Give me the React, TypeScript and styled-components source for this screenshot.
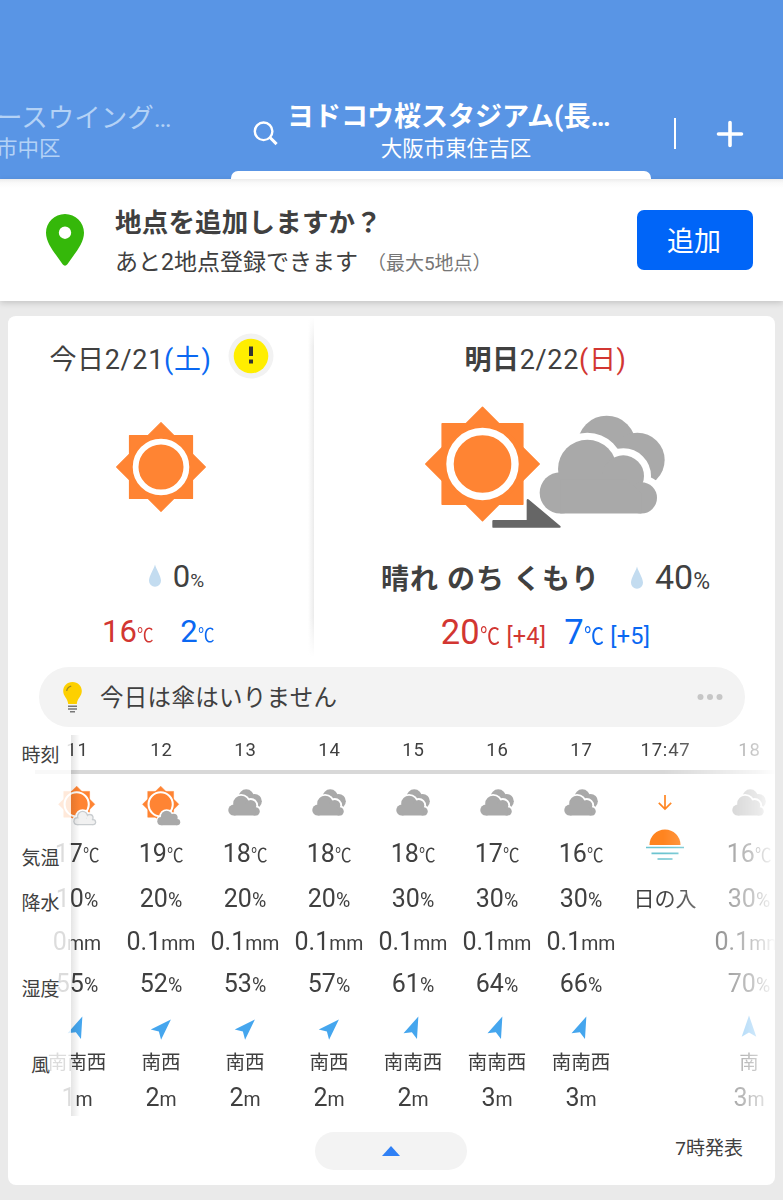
import React from "react";
import styled, { createGlobalStyle, css } from "styled-components";

const INK = "#404040";
const RED = "#d23632";
const BLUE = "#0a68f2";

const GlobalStyle = createGlobalStyle`
  *, *::before, *::after { box-sizing: border-box; }
  body {
    margin: 0;
    background: #eaeaea;
    color: ${INK};
    font-family: Roboto, "Noto Sans CJK JP", sans-serif;
  }
`;

const Screen = styled.div`
  width: 783px;
  height: 1200px;
  overflow: hidden;
  background: #eaeaea;
`;

/* ---------- header ---------- */

const Header = styled.header`
  display: flex;
  height: 179px;
  padding-top: 98px;
  background: #5995e5;
  color: #fff;
  white-space: nowrap;
`;

const Tab = styled.div<{ $active?: boolean }>`
  display: flex;
  flex: none;
  width: ${(p) => (p.$active ? 420 : 231)}px;
  height: 81px;
  padding-left: ${(p) => (p.$active ? 22 : 0)}px;
  color: ${(p) => (p.$active ? "#fff" : "#b4d2f6")};
  ${(p) =>
    p.$active &&
    css`
      position: relative;
      &::after {
        content: "";
        position: absolute;
        left: 0;
        right: 0;
        bottom: 0;
        height: 8px;
        background: #fff;
        border-radius: 7px 7px 0 0;
      }
    `}
`;

const SearchSlot = styled.div`
  width: 34px;
  padding-top: 22px;
`;

const TabText = styled.div<{ $active?: boolean }>`
  padding-top: 1px;
  text-align: ${(p) => (p.$active ? "center" : "left")};
  width: ${(p) => (p.$active ? "338px" : "auto")};
  margin-left: ${(p) => (p.$active ? 0 : -4)}px;
`;

const TabTitle = styled.div<{ $active?: boolean }>`
  padding-right: ${(p) => (p.$active ? 20 : 0)}px;
  font-size: ${(p) => (p.$active ? 27 : 26.5)}px;
  line-height: 37px;
  font-weight: ${(p) => (p.$active ? 700 : 400)};
`;

const TabSub = styled.div`
  font-size: 21.5px;
  line-height: 26px;
`;

const HeaderTools = styled.div`
  display: flex;
  align-items: center;
  height: 72px;
  margin-left: 7px;
`;

const ToolDivider = styled.span`
  width: 2px;
  height: 31px;
  margin: 0 40px 2px 16px;
  background: #fff;
`;

/* ---------- add-location banner ---------- */

const Banner = styled.section`
  display: flex;
  align-items: center;
  height: 122px;
  padding: 0 30px 0 46px;
  background: linear-gradient(#ececec 0, #fafafa 4px, #fff 9px);
  box-shadow: 0 2px 6px rgba(0, 0, 0, 0.16);
`;

const BannerText = styled.div`
  flex: 1;
  padding: 6px 0 0 31px;
  white-space: nowrap;
`;

const BannerTitle = styled.div`
  font-size: 26.5px;
  line-height: 40px;
  letter-spacing: 0.2px;
  font-weight: 700;
`;

const BannerSub = styled.div`
  font-size: 23px;
  line-height: 40px;
`;

const BannerNote = styled.span`
  margin-left: 9px;
  font-size: 19px;
  color: #767676;
`;

const AddButton = styled.button`
  width: 116px;
  height: 60px;
  border: 0;
  border-radius: 7px;
  background: #0065f8;
  color: #fff;
  font: 400 27px/60px Roboto, "Noto Sans CJK JP", sans-serif;
  padding: 2px 2px 0 0;
`;

/* ---------- forecast card ---------- */

const Card = styled.main`
  width: 767px;
  height: 869px;
  margin: 15px 8px 0;
  padding-top: 1px;
  border-radius: 8px;
  background: #fff;
  overflow: hidden;
`;

const Days = styled.div`
  display: flex;
  height: 350px;
`;

const Day = styled.section<{ $wide?: boolean }>`
  display: flex;
  flex-direction: column;
  align-items: center;
  width: ${(p) => (p.$wide ? 461 : 306)}px;
  height: 340px;
  padding-left: ${(p) => (p.$wide ? 2 : 0)}px;
  ${(p) =>
    !p.$wide &&
    css`
      background:
        linear-gradient(#fff, rgba(255, 255, 255, 0) 30px, rgba(255, 255, 255, 0) 300px, #fff),
        linear-gradient(to right, #fff, #ebebeb) right / 6px 100% no-repeat;
    `}
`;

const DayDate = styled.div`
  display: flex;
  align-items: center;
  height: 82px;
  font-size: 27px;
  letter-spacing: 0.65px;
  white-space: nowrap;
`;

const Weekday = styled.span<{ $color: string }>`
  color: ${(p) => p.$color};
`;

const Alert = styled.span`
  display: flex;
  margin: -4px -1px 0 16px;
`;

const Picture = styled.div<{ $wide?: boolean }>`
  display: flex;
  align-items: center;
  justify-content: center;
  height: 140px;
  padding: ${(p) => (p.$wide ? "5px 2px 0 0" : "0 0 2px")};
`;

const Rain = styled.div<{ $wide?: boolean }>`
  display: flex;
  align-items: baseline;
  height: 50px;
  margin: ${(p) => (p.$wide ? 18 : 14)}px 0 0 ${(p) => (p.$wide ? 0 : 31)}px;
  line-height: 50px;
  font-size: ${(p) => (p.$wide ? 34 : 31)}px;
  white-space: nowrap;
`;

const RainUnit = styled.span<{ $wide?: boolean }>`
  font-size: ${(p) => (p.$wide ? 23 : 19)}px;
`;

const Condition = styled.strong`
  font-size: 28px;
  font-weight: 700;
  letter-spacing: 1px;
  margin-right: 31px;
`;

const Temps = styled.div<{ $wide?: boolean }>`
  display: flex;
  align-items: baseline;
  gap: ${(p) => (p.$wide ? 18 : 27)}px;
  height: 50px;
  line-height: 50px;
  margin-top: 5px;
  margin-right: ${(p) => (p.$wide ? 0 : 6)}px;
  font-size: ${(p) => (p.$wide ? 34.5 : 31)}px;
  white-space: nowrap;
`;

const Temp = styled.span<{ $color: string }>`
  color: ${(p) => p.$color};
`;

const Celsius = styled.small<{ $size: number }>`
  display: inline-block;
  margin-right: ${(p) => -0.14 * p.$size}px;
  font-size: ${(p) => p.$size}px;
  transform: scaleX(0.87);
  transform-origin: left;
`;

const Diff = styled.small`
  margin-left: 7px;
  font-size: 23.5px;
  letter-spacing: 0.2px;
`;

const Tip = styled.div`
  display: flex;
  align-items: center;
  width: 706px;
  height: 60px;
  margin: 0 31px;
  padding: 0 22px 0 22px;
  border-radius: 30px;
  background: #f3f3f3;
  font-size: 23.5px;
  letter-spacing: 0.3px;
`;

const TipText = styled.span`
  flex: 1;
  padding: 0 0 3px 15px;
`;

/* ---------- hourly table ---------- */

const Hourly = styled.div`
  position: relative;
  height: 392px;
  margin-top: 4px;
  overflow: hidden;
`;

const Columns = styled.div`
  display: flex;
  width: 767px;
  height: 390px;
  padding-left: 27px;
  overflow: hidden;
  mask-image: linear-gradient(to right, #000 655px, rgba(0, 0, 0, 0.25) 750px, rgba(0, 0, 0, 0.02));
`;

const Column = styled.div`
  flex: none;
  width: 84px;
  text-align: center;
  white-space: nowrap;
`;

const Time = styled.div`
  height: 43px;
  border-bottom: 4px solid #d8d8d8;
  font-size: 18.5px;
  line-height: 39px;
  letter-spacing: 0.8px;
  padding-left: 1px;
`;

const IconCell = styled.div<{ $dy: number }>`
  display: flex;
  align-items: center;
  justify-content: center;
  height: 60px;
  padding-top: ${(p) => Math.max(p.$dy, 0)}px;
  padding-bottom: ${(p) => Math.max(-p.$dy, 0)}px;
`;

const Value = styled.div<{ $h: number }>`
  height: ${(p) => p.$h}px;
  line-height: ${(p) => p.$h}px;
  font-size: 25px;
`;

const Unit = styled.small`
  font-size: 19.5px;
`;

const WindIcon = styled.div`
  display: flex;
  align-items: center;
  justify-content: center;
  height: 41px;
`;

const Direction = styled.div`
  height: 29px;
  font-size: 19.5px;
  line-height: 27px;
`;

const SunsetIcon = styled.div`
  display: flex;
  justify-content: center;
  height: 100px;
  padding-top: 20px;
`;

const SunsetText = styled.div`
  height: 50px;
  font-size: 21px;
  line-height: 51px;
`;

const Labels = styled.div`
  position: absolute;
  left: 0;
  top: 4px;
  width: 63px;
  height: 381px;
  padding-left: 2px;
  background: rgba(255, 255, 255, 0.82);
  font-size: 19px;
  text-align: center;
`;

const LabelShade = styled.div`
  position: absolute;
  left: 63px;
  top: 4px;
  width: 9px;
  height: 381px;
  background: linear-gradient(to right, rgba(0, 0, 0, 0.1), transparent);
`;

const Label = styled.div<{ $gap?: number }>`
  height: 40px;
  margin-top: ${(p) => p.$gap ?? 0}px;
  line-height: 41px;
`;

const CardFoot = styled.div`
  display: grid;
  grid-template-columns: 1fr 152px 1fr;
  align-items: center;
  height: 50px;
  margin-top: 3px;
  padding: 0 32px 0 31px;
`;

const Collapse = styled.button`
  grid-column: 2;
  display: flex;
  align-items: center;
  justify-content: center;
  height: 38px;
  padding: 0;
  border: 0;
  border-radius: 19px;
  background: #f3f3f3;
`;

const Issued = styled.span`
  justify-self: end;
  margin-bottom: 9px;
  font-size: 19px;
`;

/* ---------- drawings ---------- */

const SunShape = ({ r = 25.4, w = 5.8 }: { r?: number; w?: number }) => (
  <g>
    <g fill="#ff8433" stroke="#ff8433" strokeWidth="1.2" strokeLinejoin="round">
      <rect x="-31.5" y="-31.5" width="63" height="63" />
      <path d="M0-44.3 44.3 0 0 44.3-44.3 0Z" />
    </g>
    <circle r={r} fill="none" stroke="#fff" strokeWidth={w} />
  </g>
);

const CloudFront = ({ inset = 0 }: { inset?: number }) => (
  <>
    <circle cx="631" cy="489.500" r={62 - inset} />
    <circle cx="712" cy="418" r={88 - inset} />
    <circle cx="820" cy="439" r={62 - inset} />
    <circle cx="874" cy="504.500" r={47 - inset} />
    <path d={`M631 450H830L874 490V${551.5 - inset}H631Z`} />
  </>
);

const CloudPair = () => (
  <g>
    <g fill="#a9a9a9">
      <circle cx="770" cy="345" r="87" />
      <circle cx="862" cy="391" r="82" />
    </g>
    <g fill="#fff" stroke="#fff" strokeWidth="42">
      <CloudFront />
    </g>
    <g fill="#a9a9a9">
      <CloudFront />
    </g>
  </g>
);

const Search = () => (
  <svg width="26" height="26" viewBox="0 0 26 26" fill="none" stroke="#fff" strokeWidth="2.4">
    <circle cx="10.600" cy="11.300" r="8.800" />
    <path d="m17 17.500 6.600 6.600" strokeWidth="3" />
  </svg>
);

const Plus = () => (
  <svg width="28" height="28" viewBox="0 0 28 28" stroke="#fff" strokeWidth="3.600" strokeLinecap="round">
    <path d="M14 2.500v23M2.500 14h23" />
  </svg>
);

const Pin = () => (
  <svg width="38" height="52" viewBox="0 0 38 52">
    <path
      fill="#35b80a"
      fillRule="evenodd"
      d="M19 0C8.500 0 0 8.400 0 18.700 0 30 10 40 16.600 50.300Q19 53 21.400 50.300C28 40 38 30 38 18.700 38 8.400 29.500 0 19 0Zm0 12.500a6.200 6.200 0 1 1 0 12.400 6.200 6.200 0 0 1 0-12.400Z"
    />
  </svg>
);

const AlertIcon = () => (
  <svg width="46" height="46" viewBox="0 0 46 46">
    <circle cx="23" cy="23" r="22.500" fill="#f2f2f2" />
    <circle cx="23" cy="23" r="17.300" fill="#ffee00" />
    <path d="M21 13.500h4v9.500h-4zM21 26.500h4v4h-4z" fill="#333" />
  </svg>
);

const Drop = () => (
  <svg width="24" height="23" viewBox="0 0 24 23">
    <path d="M6 .5C7 5 12 12 12 16.800a6 6 0 0 1-12 0C0 12 5 5 6 .5Z" fill="#c3dcf0" />
  </svg>
);

const Bulb = () => (
  <svg width="24" height="34" viewBox="0 0 24 34">
    <path
      d="M11.500 2C6 2 2.200 6 2.200 11c0 5.500 4.300 6.500 5 13h8.600c.7-6.500 5-7.500 5-13C20.800 6 17 2 11.500 2Z"
      fill="#fdd000"
    />
    <path d="M5.700 11c.3-2.500 2-4.200 4.500-4.800" fill="none" stroke="#a08a20" strokeWidth="1.300" />
    <path d="M7 26.200h9M7 29h9M9 31.800h5" stroke="#777" strokeWidth="1.500" />
  </svg>
);

const More = () => (
  <svg width="26" height="8" viewBox="0 0 26 8" fill="#c6c6c6">
    <circle cx="3.500" cy="4" r="3" />
    <circle cx="13" cy="4" r="3" />
    <circle cx="22.500" cy="4" r="3" />
  </svg>
);

const SunBig = () => (
  <svg width="90" height="90" viewBox="-45 -45 90 90">
    <SunShape />
  </svg>
);

const SunThenCloud = () => (
  <svg width="250" height="130" viewBox="210 220 750 390">
    <CloudPair />
    <g transform="translate(397.500 403) scale(3.840)">
      <SunShape />
    </g>
    <path
      d="M430 571H530V511Q532 506 537 510L631 589Q634 594 629 594.500H430Q427 594.500 427 591V574Q427 571 430 571Z"
      fill="#666"
    />
  </svg>
);

const CloudIcon = () => (
  <svg width="34" height="27" viewBox="566 256 380 298">
    <CloudPair />
  </svg>
);

const SunCloudIcon = ({ light }: { light?: boolean }) => (
  <svg width="42" height="42" viewBox="-63 -63 126 126">
    <g transform="translate(-1 -2) scale(1.230)">
      <SunShape r={29.5} w={5} />
    </g>
    <g transform="translate(-122 -47) scale(.195)">
      <g fill="#fff" stroke="#fff" strokeWidth="50">
        <CloudFront />
      </g>
      <g fill={light ? "#c9cdd0" : "#a9a9a9"}>
        <CloudFront />
      </g>
      {light && (
        <g fill="#f1f1f1">
          <CloudFront inset={20} />
        </g>
      )}
    </g>
  </svg>
);

const Sunset = () => (
  <svg width="38" height="68" viewBox="0 0 38 68" fill="none">
    <path d="M19 1v14M12.800 8.800 19 15l6.200-6.200" stroke="#ff841f" strokeWidth="1.700" />
    <path d="M3.500 51a15.500 15.500 0 0 1 31 0Z" fill="#ff841f" />
    <path d="M0 53.500h38M5.500 59.300h27M11.500 65h15" stroke="#6cc4d0" strokeWidth="1.700" />
  </svg>
);

const Arrow = ({ deg }: { deg: number }) => (
  <svg width="30" height="30" viewBox="-15 -15.500 30 30">
    <path transform={`rotate(${deg})`} d="M0-14 7.300 7.200 0 3-7.300 7.200Z" fill="#45a6ee" />
  </svg>
);

const UpTriangle = () => (
  <svg width="18" height="10" viewBox="0 0 18 10">
    <path d="M9 0 18 10H0Z" fill="#2f80f5" />
  </svg>
);

/* ---------- data ---------- */

type Hour = {
  time: string;
  icon: "sunLightCloud" | "sunCloud" | "cloud";
  temp: number;
  rain: number;
  mm: string;
  hum: number;
  deg: number;
  dir: string;
  wind: number;
};

const before: Hour[] = [
  { time: "11", icon: "sunLightCloud", temp: 17, rain: 10, mm: "0", hum: 55, deg: 22.5, dir: "南南西", wind: 1 },
  { time: "12", icon: "sunCloud", temp: 19, rain: 20, mm: "0.1", hum: 52, deg: 45, dir: "南西", wind: 2 },
  { time: "13", icon: "cloud", temp: 18, rain: 20, mm: "0.1", hum: 53, deg: 45, dir: "南西", wind: 2 },
  { time: "14", icon: "cloud", temp: 18, rain: 20, mm: "0.1", hum: 57, deg: 45, dir: "南西", wind: 2 },
  { time: "15", icon: "cloud", temp: 18, rain: 30, mm: "0.1", hum: 61, deg: 22.5, dir: "南南西", wind: 2 },
  { time: "16", icon: "cloud", temp: 17, rain: 30, mm: "0.1", hum: 64, deg: 22.5, dir: "南南西", wind: 3 },
  { time: "17", icon: "cloud", temp: 16, rain: 30, mm: "0.1", hum: 66, deg: 22.5, dir: "南南西", wind: 3 },
];

const after: Hour[] = [
  { time: "18", icon: "cloud", temp: 16, rain: 30, mm: "0.1", hum: 70, deg: 0, dir: "南", wind: 3 },
];

const HourColumn = ({ h }: { h: Hour }) => (
  <Column>
    <Time>{h.time}</Time>
    <IconCell $dy={h.icon === "cloud" ? -4 : 2}>
      {h.icon === "cloud" ? <CloudIcon /> : <SunCloudIcon light={h.icon === "sunLightCloud"} />}
    </IconCell>
    <Value $h={40}>{h.temp}<Celsius $size={19}>℃</Celsius></Value>
    <Value $h={50}>{h.rain}<Unit>%</Unit></Value>
    <Value $h={36}>{h.mm}<Unit>mm</Unit></Value>
    <Value $h={48}>{h.hum}<Unit>%</Unit></Value>
    <WindIcon><Arrow deg={h.deg} /></WindIcon>
    <Direction>{h.dir}</Direction>
    <Value $h={40}>{h.wind}<Unit>m</Unit></Value>
  </Column>
);

export default function App() {
  return (
    <Screen>
      <GlobalStyle />
      <Header>
        <Tab>
          <TabText>
            <TabTitle>ースウイング…</TabTitle>
            <TabSub>市中区</TabSub>
          </TabText>
        </Tab>
        <Tab $active>
          <SearchSlot><Search /></SearchSlot>
          <TabText $active>
            <TabTitle $active>ヨドコウ桜スタジアム(長…</TabTitle>
            <TabSub>大阪市東住吉区</TabSub>
          </TabText>
        </Tab>
        <HeaderTools>
          <ToolDivider />
          <Plus />
        </HeaderTools>
      </Header>

      <Banner>
        <Pin />
        <BannerText>
          <BannerTitle>地点を追加しますか？</BannerTitle>
          <BannerSub>
            あと2地点登録できます<BannerNote>（最大5地点）</BannerNote>
          </BannerSub>
        </BannerText>
        <AddButton>追加</AddButton>
      </Banner>

      <Card>
        <Days>
          <Day>
            <DayDate>
              <span>今日2/21<Weekday $color={BLUE}>(土)</Weekday></span>
              <Alert><AlertIcon /></Alert>
            </DayDate>
            <Picture><SunBig /></Picture>
            <Rain><Drop /><span>0<RainUnit>%</RainUnit></span></Rain>
            <Temps>
              <Temp $color={RED}>16<Celsius $size={19}>℃</Celsius></Temp>
              <Temp $color={BLUE}>2<Celsius $size={19}>℃</Celsius></Temp>
            </Temps>
          </Day>
          <Day $wide>
            <DayDate>
              <span><b>明日</b>2/22<Weekday $color={RED}>(日)</Weekday></span>
            </DayDate>
            <Picture $wide><SunThenCloud /></Picture>
            <Rain $wide>
              <Condition>晴れ のち くもり</Condition>
              <Drop /><span>40<RainUnit $wide>%</RainUnit></span>
            </Rain>
            <Temps $wide>
              <Temp $color={RED}>20<Celsius $size={23}>℃</Celsius><Diff>[+4]</Diff></Temp>
              <Temp $color={BLUE}>7<Celsius $size={23}>℃</Celsius><Diff>[+5]</Diff></Temp>
            </Temps>
          </Day>
        </Days>

        <Tip>
          <Bulb />
          <TipText>今日は傘はいりません</TipText>
          <More />
        </Tip>

        <Hourly>
          <Columns>
            {before.map((h) => <HourColumn key={h.time} h={h} />)}
            <Column>
              <Time>17:47</Time>
              <SunsetIcon><Sunset /></SunsetIcon>
              <SunsetText>日の入</SunsetText>
            </Column>
            {after.map((h) => <HourColumn key={h.time} h={h} />)}
          </Columns>
          <LabelShade />
          <Labels>
            <Label>時刻</Label>
            <Label $gap={63}>気温</Label>
            <Label $gap={5}>降水</Label>
            <Label $gap={46}>湿度</Label>
            <Label $gap={36}>風</Label>
          </Labels>
        </Hourly>

        <CardFoot>
          <Collapse aria-label="閉じる"><UpTriangle /></Collapse>
          <Issued>7時発表</Issued>
        </CardFoot>
      </Card>
    </Screen>
  );
}
